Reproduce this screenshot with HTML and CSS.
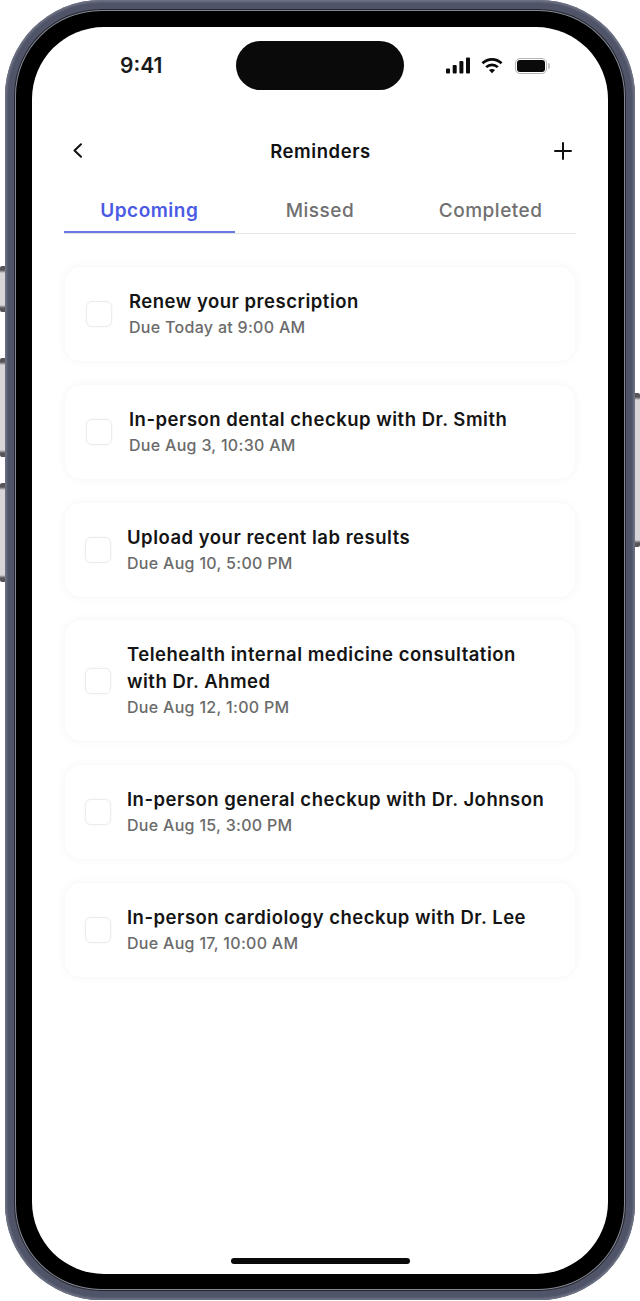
FILE: index.html
```html
<!DOCTYPE html>
<html lang="en">
<head>
    <meta charset="UTF-8">
    <meta name="viewport" content="width=device-width, initial-scale=1.0">
    <title>Reminders</title>
    <link rel="stylesheet" href="styles.css">
</head>
<body>
    <div class="phone">
        <span class="side-btn left mute"></span>
        <span class="side-btn left vol-up"></span>
        <span class="side-btn left vol-down"></span>
        <span class="side-btn right power"></span>

        <div class="bezel">
            <div class="screen">
                <div class="status-bar">
                    <span class="time">9:41</span>
                    <div class="island"></div>
                    <div class="status-icons">
                        <svg width="24" height="17" viewBox="0 0 24 17" fill="#0a0a0a">
                            <rect x="0" y="11.500" width="4" height="5" rx="1"/>
                            <rect x="6.700" y="8" width="4" height="8.500" rx="1"/>
                            <rect x="13.400" y="4" width="4" height="12.500" rx="1"/>
                            <rect x="20" y="0.500" width="4" height="16" rx="1"/>
                        </svg>
                        <svg width="22" height="17" viewBox="0 0 23 17" fill="none" stroke="#0a0a0a" stroke-width="2.800">
                            <path d="M1.500 6.200C7.300 .8 15.700 .8 21.500 6.200"/>
                            <path d="M5.400 10.200C8.900 7 14.100 7 17.600 10.200"/>
                            <path d="M11.500 16.500L8.300 13.300C10.200 11.700 12.800 11.700 14.700 13.300Z" fill="#0a0a0a" stroke="none"/>
                        </svg>
                        <div class="battery"><span class="battery-level"></span></div>
                    </div>
                </div>

                <div class="content">
                    <div class="nav">
                        <svg width="24" height="24" viewBox="0 0 24 24" fill="none" stroke="#111" stroke-width="2" stroke-linecap="round" stroke-linejoin="round">
                            <path d="M15 5.200L8.500 11.500L15 17.800"/>
                        </svg>
                        <h1>Reminders</h1>
                        <svg width="24" height="24" viewBox="0 0 24 24" fill="none" stroke="#111" stroke-width="2" stroke-linecap="round">
                            <path d="M12 4V20M4 12H20"/>
                        </svg>
                    </div>

                    <div class="tabs">
                        <div class="tab active">Upcoming</div>
                        <div class="tab">Missed</div>
                        <div class="tab">Completed</div>
                    </div>

                    <div class="list">
                        <div class="card">
                            <span class="check"></span>
                            <div>
                                <div class="card-title">Renew your prescription</div>
                                <div class="card-due">Due Today at 9:00 AM</div>
                            </div>
                        </div>
                        <div class="card">
                            <span class="check"></span>
                            <div>
                                <div class="card-title">In-person dental checkup with Dr. Smith</div>
                                <div class="card-due">Due Aug 3, 10:30 AM</div>
                            </div>
                        </div>
                        <div class="card tight">
                            <span class="check"></span>
                            <div>
                                <div class="card-title">Upload your recent lab results</div>
                                <div class="card-due">Due Aug 10, 5:00 PM</div>
                            </div>
                        </div>
                        <div class="card tight">
                            <span class="check"></span>
                            <div>
                                <div class="card-title">Telehealth internal medicine consultation<br>with Dr. Ahmed</div>
                                <div class="card-due">Due Aug 12, 1:00 PM</div>
                            </div>
                        </div>
                        <div class="card tight">
                            <span class="check"></span>
                            <div>
                                <div class="card-title">In-person general checkup with Dr. Johnson</div>
                                <div class="card-due">Due Aug 15, 3:00 PM</div>
                            </div>
                        </div>
                        <div class="card tight">
                            <span class="check"></span>
                            <div>
                                <div class="card-title">In-person cardiology checkup with Dr. Lee</div>
                                <div class="card-due">Due Aug 17, 10:00 AM</div>
                            </div>
                        </div>
                    </div>
                </div>

                <div class="home-bar"></div>
            </div>
        </div>
    </div>
</body>
</html>
```

FILE: styles.css
```css
* {
    margin: 0;
    padding: 0;
    box-sizing: border-box;
    font-family: Inter, "Liberation Sans", sans-serif;
}

body {
    background-color: #ffffff;
    color: #111;
}

/* Phone body */
.phone {
    position: relative;
    height: 1300px;
    margin: 0 5px;
    padding: 9px;
    background-color: #4f5468;
    border-radius: 96px;
    box-shadow: inset 0 0 2px 2px #6d7284;
}

/* Black glass, with the thin metal line around it */
.bezel {
    height: 100%;
    padding: 18px 18px 17px;
    background-color: #000;
    border-radius: 87px;
    box-shadow: inset 0 0 0 1px #23252c, inset 0 0 0 2px #858997;
}

.side-btn {
    position: absolute;
    width: 5px;
    background: linear-gradient(#55555a 0, #55555a 4px, #d6d6d8 7px, #d6d6d8 calc(100% - 7px), #55555a calc(100% - 4px));
}

.side-btn.left {
    left: -5px;
    border-radius: 2px 0 0 2px;
}

.side-btn.right {
    right: -5px;
    border-radius: 0 2px 2px 0;
}

.mute { top: 266px; height: 46px; }
.vol-up { top: 358px; height: 99px; }
.vol-down { top: 483px; height: 99px; }
.power { top: 393px; height: 154px; }

.screen {
    position: relative;
    height: 100%;
    background-color: #fff;
    border-radius: 72px;
    overflow: hidden;
}

/* Status bar */
.status-bar {
    display: grid;
    grid-template-columns: 1fr 168px 1fr;
    align-items: center;
    padding-top: 14px;
}

.time {
    padding-left: 88px;
    font-size: 21px;
    font-weight: 600;
    color: #1a1a1a;
}

.island {
    height: 49px;
    background-color: #0a0a0a;
    border-radius: 25px;
}

.status-icons {
    display: flex;
    align-items: center;
    gap: 11px;
    padding-left: 42px;
}

.battery {
    position: relative;
    width: 32px;
    height: 16px;
    margin-left: 1px;
    padding: 1px;
    border: 1px solid #b5b5b5;
    border-radius: 5px;
}

.battery::after {
    content: "";
    position: absolute;
    top: 4px;
    right: -4px;
    width: 2px;
    height: 6px;
    background-color: #c4c4c4;
    border-radius: 0 2px 2px 0;
}

.battery-level {
    display: block;
    height: 100%;
    background-color: #0a0a0a;
    border-radius: 3px;
}

.content {
    padding: 45px 32px 0;
}

/* Top navigation */
.nav {
    display: flex;
    justify-content: space-between;
    align-items: center;
    height: 32px;
    padding: 0 1px 0 2px;
}

.nav h1 {
    font-size: 18.500px;
    font-weight: 600;
    letter-spacing: 0.55px;
}

/* Tabs */
.tabs {
    display: grid;
    grid-template-columns: repeat(3, 1fr);
    margin-top: 25px;
    border-bottom: 1px solid #e3e3e6;
}

.tab {
    height: 41px;
    padding-top: 7px;
    text-align: center;
    font-size: 19px;
    line-height: 24px;
    font-weight: 500;
    letter-spacing: 0.5px;
    color: #707070;
}

.tab.active {
    color: #4b5ae4;
    font-weight: 600;
    border-bottom: 2px solid #6a77e4;
    margin-bottom: -1px;
}

/* Reminder cards */
.list {
    display: flex;
    flex-direction: column;
    gap: 23.800px;
    margin: 33px 1px 0;
}

.card {
    display: flex;
    align-items: center;
    gap: 17px;
    padding: 21px 21px;
    background-color: #fff;
    border-radius: 16px;
    box-shadow: 0 0 10px rgba(0, 0, 0, 0.05);
}

.card.tight {
    gap: 16px;
    padding-left: 20px;
}

.check {
    flex-shrink: 0;
    width: 26px;
    height: 26px;
    border: 1px solid #ececec;
    border-radius: 6px;
    box-shadow: 0 0 3px rgba(0, 0, 0, 0.05);
}

.card-title {
    font-size: 18.500px;
    line-height: 27px;
    font-weight: 600;
    letter-spacing: 0.5px;
    color: #141414;
}

.card-due {
    font-size: 16px;
    line-height: 25px;
    font-weight: 500;
    letter-spacing: 0.3px;
    color: #6b6b6b;
}

.home-bar {
    position: absolute;
    left: 199px;
    bottom: 10px;
    width: 179px;
    height: 6px;
    background-color: #0a0a0a;
    border-radius: 3px;
}
```
